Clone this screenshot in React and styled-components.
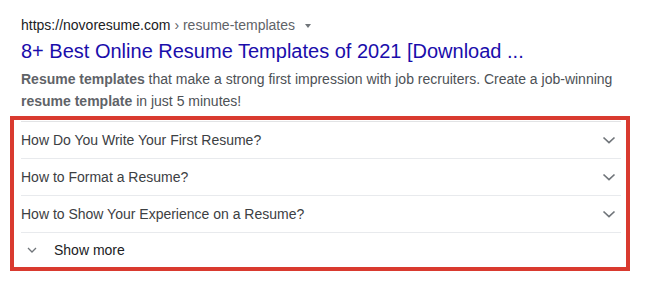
import styled, { createGlobalStyle } from "styled-components";

const GlobalStyle = createGlobalStyle`
    body {
        margin: 0;
        background: #fff;
        font-family: Arial, "Liberation Sans", sans-serif;
    }
`;

const Result = styled.div`
    padding-top: 15px;
    width: 647px;
`;

const Head = styled.div`
    padding-left: 21px;
    width: 600px;
`;

const Cite = styled.div`
    display: flex;
    align-items: center;
    font-size: 14px;
    line-height: 20px;
    color: #202124;
    span {
        color: #5f6368;
        margin-left: 4px;
    }
`;

const Caret = styled.i`
    width: 0;
    height: 0;
    margin-left: 10px;
    margin-top: 1px;
    border-left: 3px solid transparent;
    border-right: 3px solid transparent;
    border-top: 4px solid #70757a;
`;

const Title = styled.h3`
    margin: 3px 0 0;
    font-size: 20px;
    font-weight: normal;
    line-height: 26px;
    color: #1a0dab;
    white-space: nowrap;
`;

const Snippet = styled.p`
    margin: 4px 0 0;
    font-size: 14px;
    line-height: 22px;
    color: #4d5156;
    b {
        color: #5f6368;
    }
`;

const Highlight = styled.div`
    margin: 4px 0 0 10px;
    width: 600px;
    border: 4px solid #d93a2f;
    padding: 1px 5px 0 7px;
    box-shadow: 0 1px 0 #8a8a8a;
`;

const List = styled.div`
    border-top: 1px solid #e2e3e5;
`;

const Row = styled.div`
    display: flex;
    align-items: center;
    justify-content: space-between;
    height: 36px;
    border-bottom: 1px solid #e8eaed;
    font-size: 14px;
    color: #3c4043;
`;

const More = styled.div`
    display: flex;
    align-items: center;
    height: 34px;
    font-size: 14px;
    color: #202124;
    svg {
        margin: 0 17px 0 6px;
    }
`;

const Chevron = ({ size = 24, width = 1.7 }) => (
    <svg width={size} height={size} viewBox="0 0 24 24" fill="none">
        <path d="M6.5 9.5L12 14.6l5.5-5.1" stroke="#70757a" strokeWidth={width} />
    </svg>
);

const questions = [
    "How Do You Write Your First Resume?",
    "How to Format a Resume?",
    "How to Show Your Experience on a Resume?",
];

export default function App() {
    return (
        <Result>
            <GlobalStyle />
            <Head>
                <Cite>
                    https://novoresume.com<span>› resume-templates</span>
                    <Caret />
                </Cite>
                <Title>8+ Best Online Resume Templates of 2021 [Download ...</Title>
                <Snippet>
                    <b>Resume templates</b> that make a strong first impression with job recruiters. Create a job-winning{" "}
                    <b>resume template</b> in just 5 minutes!
                </Snippet>
            </Head>
            <Highlight>
                <List>
                    {questions.map((q) => (
                        <Row key={q}>
                            {q}
                            <Chevron />
                        </Row>
                    ))}
                    <More>
                        <svg width="10" height="8" viewBox="0 0 10 8" fill="none">
                            <path d="M1 2l4 4 4-4" stroke="#70757a" strokeWidth="1.3" />
                        </svg>
                        Show more
                    </More>
                </List>
            </Highlight>
        </Result>
    );
}
